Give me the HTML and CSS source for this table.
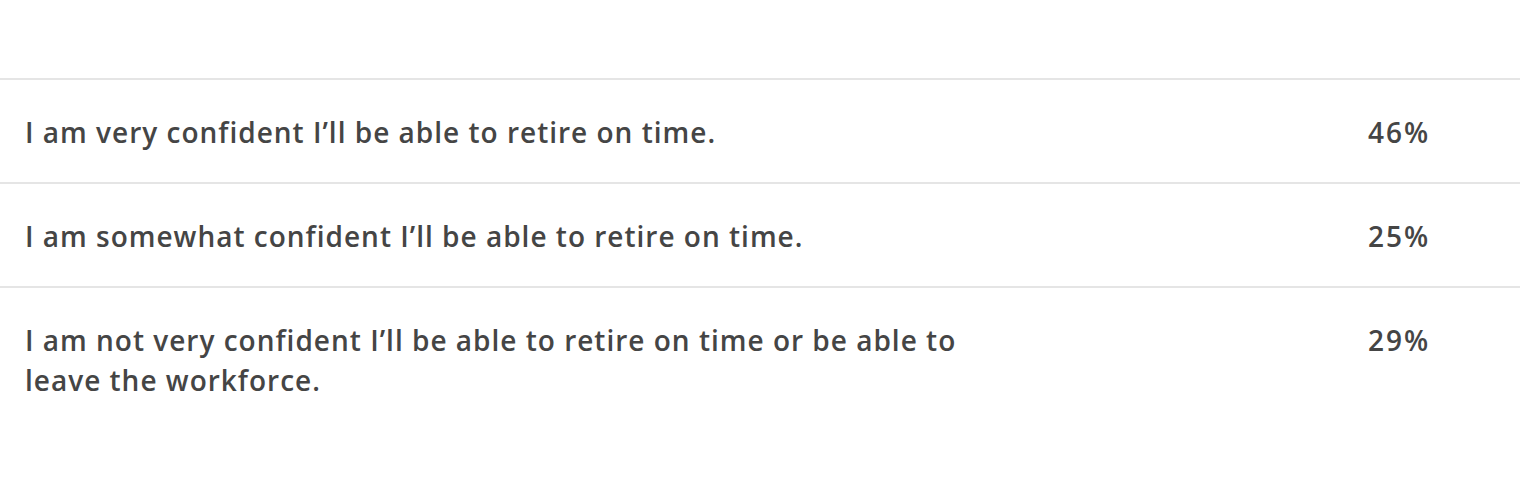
FILE: index.html
```html
<!DOCTYPE html>
<html lang="en">
<head>
<meta charset="utf-8">
<title>Retirement confidence</title>
<link rel="stylesheet" href="styles.css">
</head>
<body>
<div class="survey">
  <div class="row">
    <div class="answer">I am very confident I’ll be able to retire on time.</div>
    <div class="pct">46%</div>
  </div>
  <div class="row">
    <div class="answer">I am somewhat confident I’ll be able to retire on time.</div>
    <div class="pct">25%</div>
  </div>
  <div class="row">
    <div class="answer">I am not very confident I’ll be able to retire on time or be able to leave the workforce.</div>
    <div class="pct">29%</div>
  </div>
</div>
</body>
</html>
```
FILE: styles.css
```css
html, body {
  margin: 0;
  padding: 0;
  background: #ffffff;
}
body {
  font-family: "Open Sans", "Noto Sans", sans-serif;
  color: #454545;
}
.survey {
  padding-top: 78px;
}
.row {
  display: flex;
  align-items: flex-start;
  border-top: 2px solid #e5e5e5;
  padding: 32px 0 30px 25px;
}
.answer {
  width: 975px;
  font-size: 28px;
  line-height: 40px;
  font-weight: 600;
  letter-spacing: 1px;
}
.pct {
  margin-left: auto;
  width: 152px;
  font-size: 28px;
  line-height: 40px;
  font-weight: 600;
  letter-spacing: 2px;
}
```
